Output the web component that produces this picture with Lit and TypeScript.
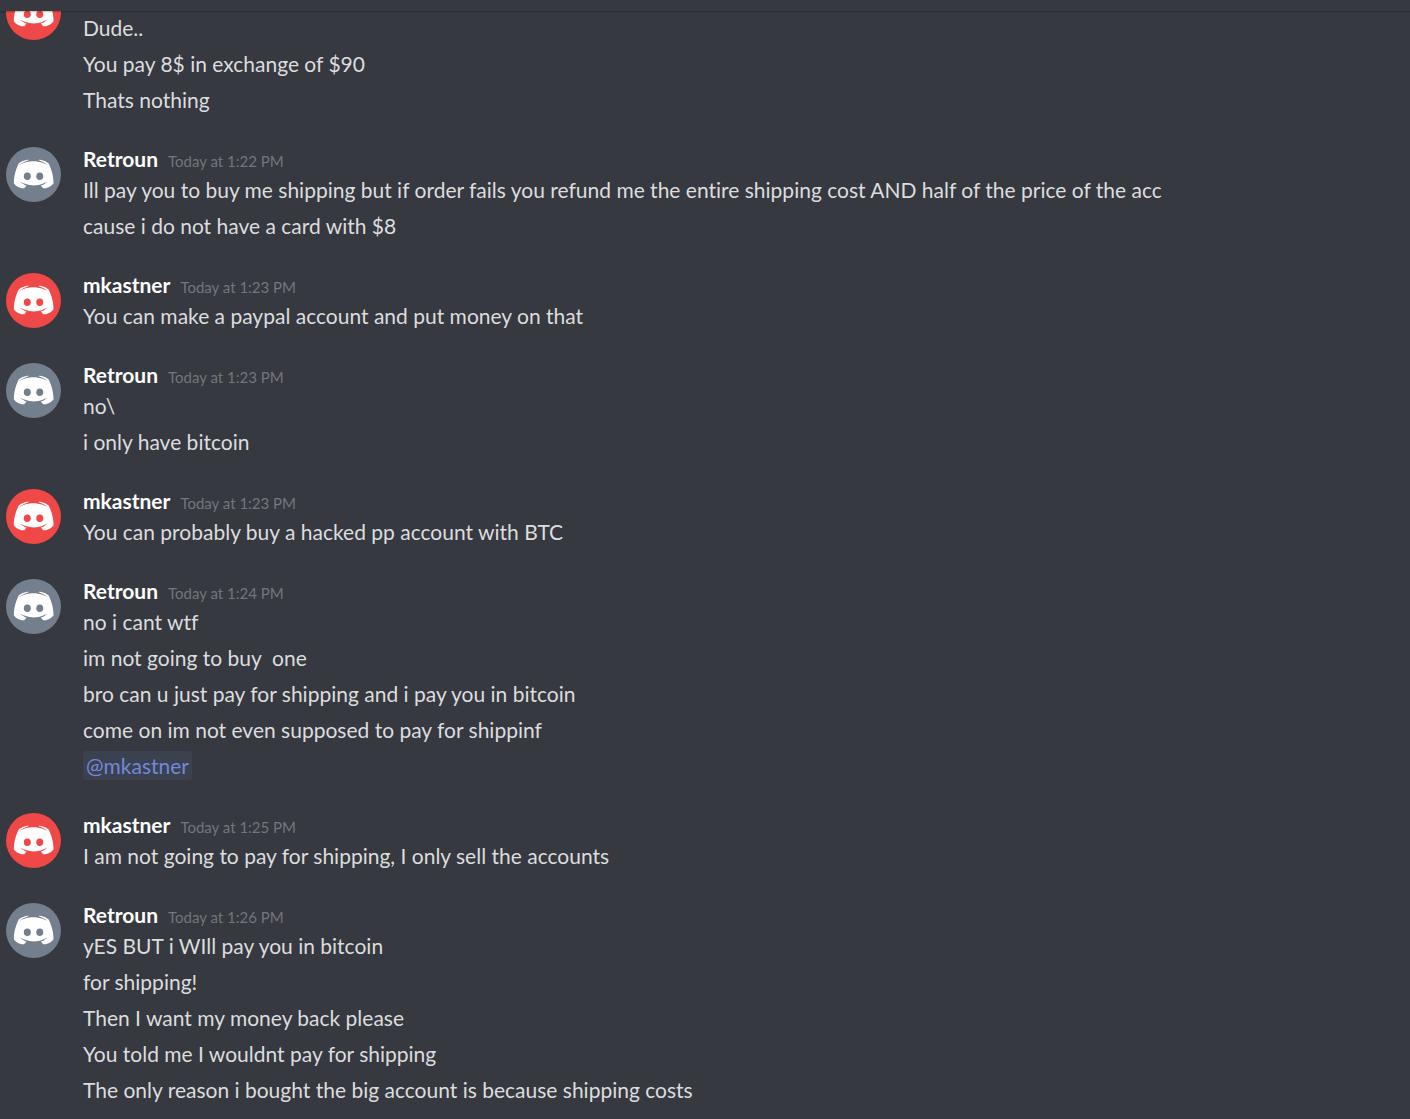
import { LitElement, html, svg, css, nothing } from 'lit';
import { customElement, property } from 'lit/decorators.js';

interface Message {
  text: string;
  mention?: boolean;
}

interface Group {
  author: string;
  time?: string;
  messages: Message[];
}

const lines = (...texts: string[]): Message[] => texts.map((text) => ({ text }));

const GROUPS: Group[] = [
  { author: 'mkastner', messages: lines('Dude..', 'You pay 8$ in exchange of $90', 'Thats nothing') },
  {
    author: 'Retroun',
    time: '1:22 PM',
    messages: lines(
      'Ill pay you to buy me shipping but if order fails you refund me the entire shipping cost AND half of the price of the acc',
      'cause i do not have a card with $8',
    ),
  },
  { author: 'mkastner', time: '1:23 PM', messages: lines('You can make a paypal account and put money on that') },
  { author: 'Retroun', time: '1:23 PM', messages: lines('no\\', 'i only have bitcoin') },
  { author: 'mkastner', time: '1:23 PM', messages: lines('You can probably buy a hacked pp account with BTC') },
  {
    author: 'Retroun',
    time: '1:24 PM',
    messages: [
      ...lines(
        'no i cant wtf',
        'im not going to buy  one',
        'bro can u just pay for shipping and i pay you in bitcoin',
        'come on im not even supposed to pay for shippinf',
      ),
      { text: '@mkastner', mention: true },
    ],
  },
  { author: 'mkastner', time: '1:25 PM', messages: lines('I am not going to pay for shipping, I only sell the accounts') },
  {
    author: 'Retroun',
    time: '1:26 PM',
    messages: lines(
      'yES BUT i WIll pay you in bitcoin',
      'for shipping!',
      'Then I want my money back please',
      'You told me I wouldnt pay for shipping',
      'The only reason i bought the big account is because shipping costs',
    ),
  },
];

const AVATAR_COLORS: Record<string, string> = { mkastner: '#f04747', Retroun: '#747f8d' };

const mascot = svg`
  <path fill="#fff" d="M150.9 150.6s-3.6-4.3-6.6-8.1c13.1-3.7 18.1-11.9 18.1-11.9-4.1 2.7-8 4.6-11.5 5.9-5 2.1-9.8 3.5-14.5 4.3-9.6 1.8-18.4 1.3-25.9-.1-5.7-1.1-10.6-2.7-14.7-4.3-2.3-.9-4.8-2-7.3-3.4-.3-.2-.6-.3-.9-.5-.2-.1-.3-.2-.4-.3-1.8-1-2.8-1.7-2.8-1.7s4.8 8 17.5 11.8c-3 3.8-6.7 8.3-6.7 8.3-22.1-.7-30.5-15.2-30.5-15.2 0-32.2 14.4-58.3 14.4-58.3 14.4-10.8 28.1-10.5 28.1-10.5l1 1.2c-18 5.2-26.3 13.1-26.3 13.1s2.2-1.2 5.9-2.9c10.7-4.7 19.2-6 22.7-6.3.6-.1 1.1-.2 1.7-.2 6.1-.8 13-1 20.2-.2 9.5 1.1 19.7 3.9 30.1 9.6 0 0-7.9-7.5-24.9-12.7l1.4-1.6s13.7-.3 28.1 10.5c0 0 14.4 26.1 14.4 58.3 0 0-8.5 14.5-30.6 15.2z"/>
  <ellipse fill="currentColor" cx="104.4" cy="115" rx="10.2" ry="11.1"/>
  <ellipse fill="currentColor" cx="140.9" cy="115" rx="10.2" ry="11.1"/>`;

@customElement('chat-avatar')
export class ChatAvatar extends LitElement {
  @property() author = '';

  static styles = css`
    :host { display: block; padding-top: 1px; }
    svg { display: block; width: 55px; height: 55px; }
  `;

  render() {
    return html`<svg viewBox="0 0 165 165" color=${AVATAR_COLORS[this.author]} aria-hidden="true">
      <circle cx="82.5" cy="82.5" r="82.5" fill="currentColor"/>
      <g transform="translate(-42.5 -29.5) scale(1.02)">${mascot}</g>
    </svg>`;
  }
}

@customElement('chat-group')
export class ChatGroup extends LitElement {
  @property({ attribute: false }) group!: Group;

  static styles = css`
    :host { display: flex; gap: 22px; }
    .body { flex: 1; min-width: 0; padding-top: 26px; }
    .body.titled { padding-top: 0; }
    .header { display: flex; align-items: baseline; gap: 10px; height: 26px; line-height: 26px; }
    .author { margin: 0; font-size: 21px; font-weight: 700; color: #fff; }
    time { font-size: 15px; color: #72767d; }
    .message { margin: 0; line-height: 36px; white-space: pre-wrap; overflow-wrap: anywhere; }
    .mention {
      padding: 2px 3px;
      border-radius: 3px;
      background: #3c4150;
      color: #7289da;
      text-decoration: none;
    }
  `;

  render() {
    const { author, time, messages } = this.group;
    return html`
      <chat-avatar author=${author}></chat-avatar>
      <div class="body ${time ? 'titled' : ''}">
        ${time
          ? html`<header class="header"><h2 class="author">${author}</h2><time>Today at ${time}</time></header>`
          : nothing}
        ${messages.map((m) => html`<p class="message">${m.mention
          ? html`<a class="mention" href="#mkastner">${m.text}</a>`
          : m.text}</p>`)}
      </div>`;
  }
}

@customElement('app-root')
export class AppRoot extends LitElement {
  static styles = css`
    :host {
      display: flex;
      flex-direction: column;
      height: 100vh;
      overflow: hidden;
      background: #36393f;
      color: #dcddde;
      font-family: Lato, 'Open Sans', sans-serif;
      font-size: 21px;
      font-variant-ligatures: none;
    }
    .topbar {
      flex: none;
      height: 11px;
      box-shadow: 0 1px 0 rgba(4, 4, 5, 0.15), 0 2px 0 rgba(6, 6, 7, 0.08);
      z-index: 1;
    }
    .scroller { flex: 1; min-height: 0; overflow: hidden; }
    .list { display: flex; flex-direction: column; gap: 28px; margin-top: -27px; padding: 0 6px; }
  `;

  render() {
    return html`
      <div class="topbar"></div>
      <main class="scroller">
        <div class="list">${GROUPS.map((g) => html`<chat-group .group=${g}></chat-group>`)}</div>
      </main>`;
  }
}
